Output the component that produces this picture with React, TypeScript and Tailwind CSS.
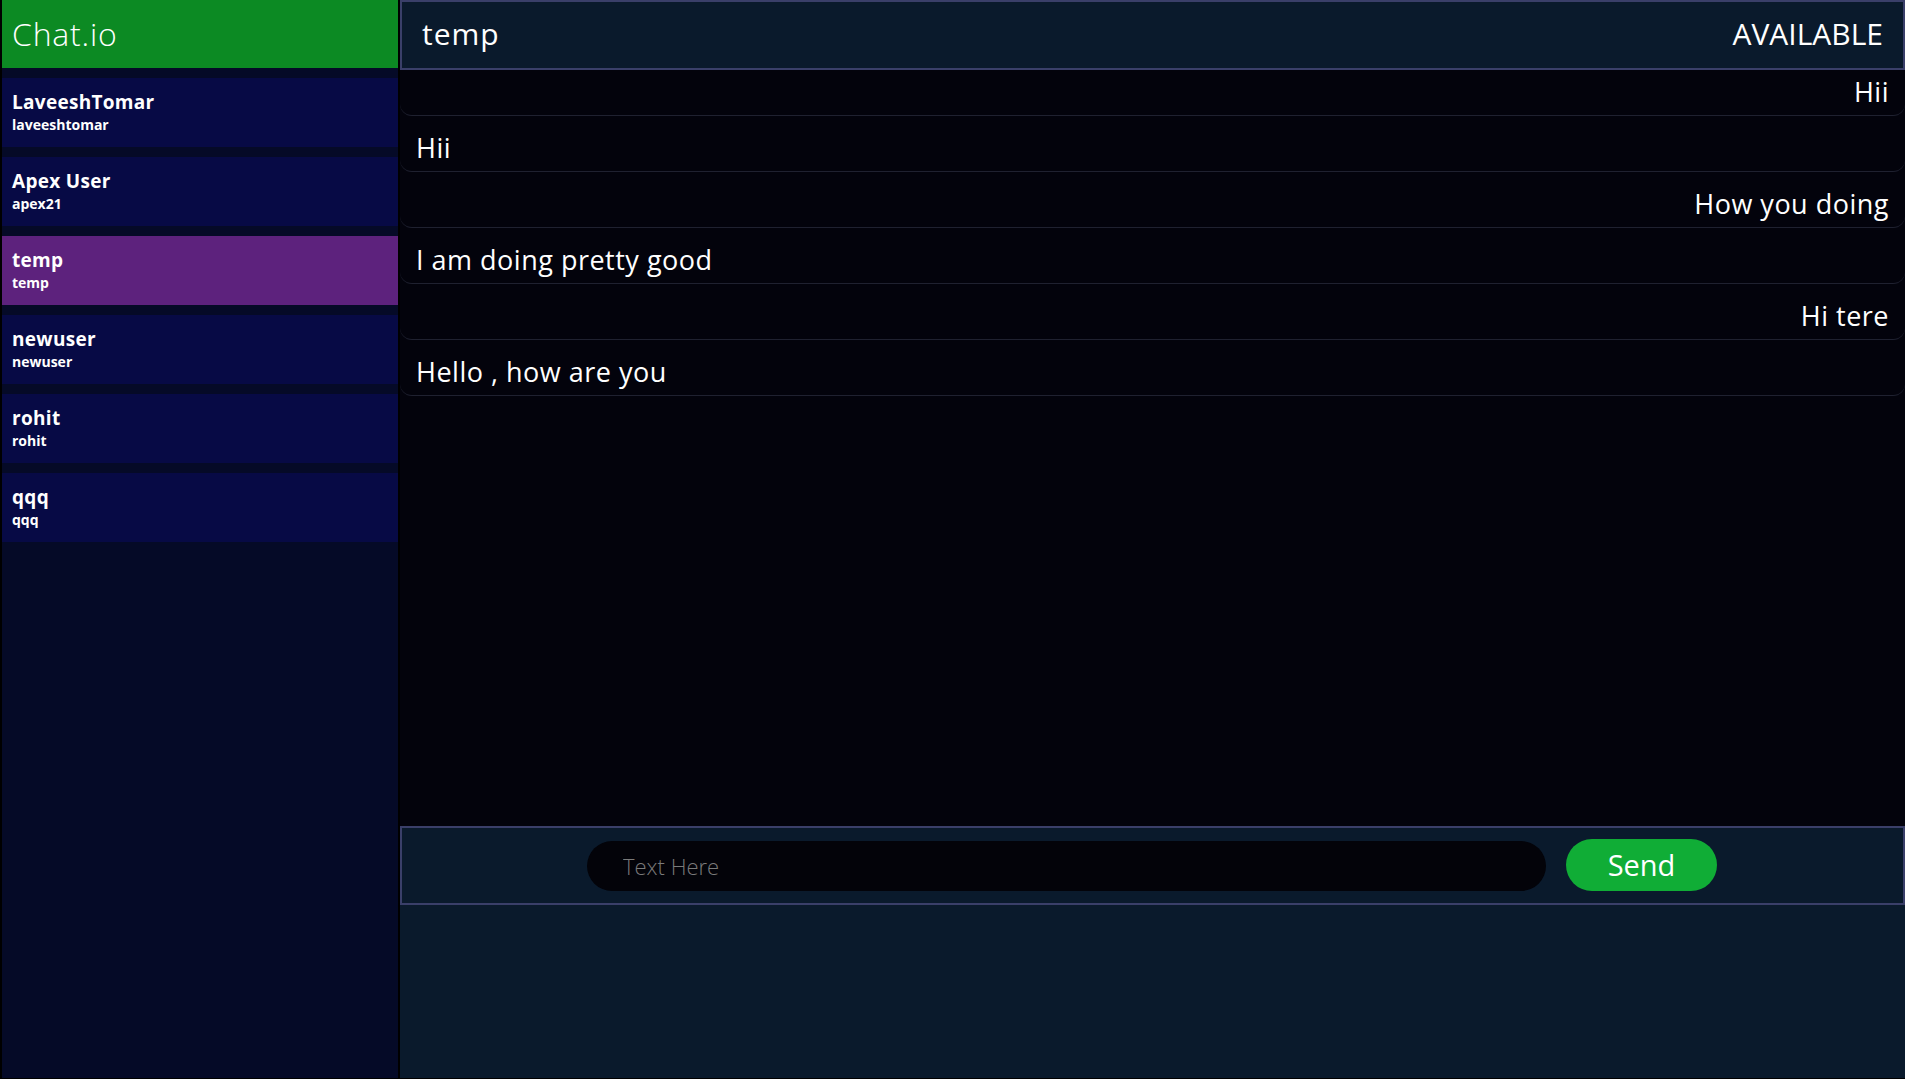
const users = [
  { name: 'LaveeshTomar', handle: 'laveeshtomar' },
  { name: 'Apex User', handle: 'apex21' },
  { name: 'temp', handle: 'temp', active: true },
  { name: 'newuser', handle: 'newuser' },
  { name: 'rohit', handle: 'rohit' },
  { name: 'qqq', handle: 'qqq' },
]

const messages = [
  { text: 'Hii', mine: true },
  { text: 'Hii', mine: false },
  { text: 'How you doing', mine: true },
  { text: 'I am doing pretty good', mine: false },
  { text: 'Hi tere', mine: true },
  { text: 'Hello , how are you', mine: false },
]

export default function App() {
  return (
    <div
      className="flex w-[1905px] h-[1079px] bg-black pl-[2px] pb-[1px] gap-[2px] text-white overflow-hidden"
      style={{ fontFamily: '"Open Sans", "Noto Sans", sans-serif' }}
    >
      <aside className="w-[396px] shrink-0 bg-[#050a27] flex flex-col">
        <div className="h-[68px] bg-[#0c8a23] flex items-center pl-[10px] text-[32px] font-light tracking-[0.8px]">
          Chat.io
        </div>
        {users.map((u) => (
          <div
            key={u.handle}
            className={
              'mt-[10px] h-[69px] px-[10px] pt-[12px] ' +
              (u.active ? 'bg-[#5d227d]' : 'bg-[#070a45]')
            }
          >
            <div className="text-[19px] font-bold leading-[24px] tracking-[0.3px]">{u.name}</div>
            <div className="text-[14px] font-bold leading-[22px]">{u.handle}</div>
          </div>
        ))}
      </aside>

      <main className="flex-1 bg-[#0a1a2c] flex flex-col">
        <header className="h-[70px] shrink-0 border-2 border-[#3a3f69] flex items-center justify-between px-[20px] pb-[3px] text-[30px]">
          <span className="tracking-[1px]">temp</span>
          <span>AVAILABLE</span>
        </header>

        <div className="h-[756px] shrink-0 bg-[#03030c] overflow-hidden">
          <div className="-mt-[10px]">
            {messages.map((m, i) => (
              <div
                key={i}
                className={
                  'h-[56px] border-b border-[#1f2130] rounded-b-xl flex items-center pt-[9px] px-[16px] text-[27px] tracking-[0.5px] ' +
                  (m.mine ? 'justify-end' : 'justify-start')
                }
              >
                {m.text}
              </div>
            ))}
          </div>
        </div>

        <div className="h-[79px] shrink-0 border-2 border-[#3a3f69] flex items-center pl-[185px] gap-[20px]">
          <input
            placeholder="Text Here"
            className="w-[959px] h-[50px] rounded-full bg-[#030309] pl-[36px] text-[22px] font-light text-white placeholder:text-[#7a7a7a] outline-none"
          />
          <button className="w-[151px] h-[52px] -mt-[2px] rounded-full bg-[#10ad36] text-[29px] text-white">
            Send
          </button>
        </div>
      </main>
    </div>
  )
}
